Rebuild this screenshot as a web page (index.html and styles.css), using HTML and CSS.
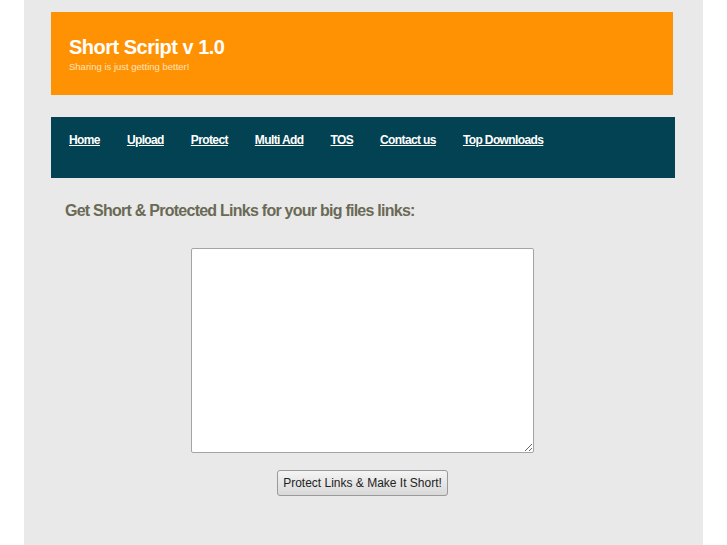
FILE: index.html
```html
<!DOCTYPE html>
<html>
<head>
<meta charset="utf-8">
<title>Short Script v 1.0</title>
<link rel="stylesheet" href="styles.css">
</head>
<body>
<div class="wrap">
  <header class="header">
    <h1 class="title">Short Script v 1.0</h1>
    <p class="tagline">Sharing is just getting better!</p>
  </header>
  <nav class="nav">
    <a href="#">Home</a>
    <a href="#">Upload</a>
    <a href="#">Protect</a>
    <a href="#">Multi Add</a>
    <a href="#">TOS</a>
    <a href="#">Contact us</a>
    <a href="#">Top Downloads</a>
  </nav>
  <h2 class="heading">Get Short &amp; Protected Links for your big files links:</h2>
  <form class="form">
    <textarea class="links"></textarea>
    <button type="button" class="submit">Protect Links &amp; Make It Short!</button>
  </form>
</div>
</body>
</html>
```
FILE: styles.css
```css
html, body {
  margin: 0;
  padding: 0;
  background: #ffffff;
}
body {
  font-family: "Liberation Sans", Arial, sans-serif;
}
.wrap {
  width: 679px;
  margin: 0 auto;
  min-height: 100vh;
  background: #e9e9e9;
  padding: 12px 0 0 27px;
  box-sizing: border-box;
}
.header {
  width: 622px;
  height: 83px;
  box-sizing: border-box;
  background: #ff9203;
  padding: 24px 18px 0;
}
.title {
  margin: 0;
  font-size: 20px;
  line-height: 23px;
  font-weight: bold;
  letter-spacing: -0.5px;
  color: #ffffff;
}
.tagline {
  margin: 2px 0 0;
  font-size: 9.5px;
  line-height: 11px;
  color: #ffe3bd;
}
.nav {
  margin-top: 22px;
  width: 624px;
  height: 61px;
  box-sizing: border-box;
  background: #024252;
  padding: 16px 18px 0;
  display: flex;
  gap: 27px;
  align-items: flex-start;
}
.nav a {
  color: #ffffff;
  font-size: 12px;
  line-height: 14px;
  font-weight: bold;
  letter-spacing: -0.62px;
  text-decoration: underline;
  text-underline-offset: 1px;
}
.heading {
  margin: 24px 0 0 14px;
  font-size: 16px;
  line-height: 18px;
  font-weight: bold;
  letter-spacing: -0.75px;
  color: #6a6a56;
}
.form {
  margin: 28px 0 0 -27px;
  width: 677px;
  display: flex;
  flex-direction: column;
  align-items: center;
}
.links {
  width: 343px;
  height: 205px;
  box-sizing: border-box;
  margin: 0;
  border: 1px solid #a4a4a4;
  border-radius: 2px;
  background: #ffffff;
}
.submit {
  margin-top: 17px;
  height: 26px;
  padding: 0 5px;
  font-family: "Liberation Sans", Arial, sans-serif;
  font-size: 12px;
  color: #222222;
  border: 1px solid #9a9a9a;
  border-radius: 3px;
  background: linear-gradient(#f4f4f4, #d9d9d9);
}
```
